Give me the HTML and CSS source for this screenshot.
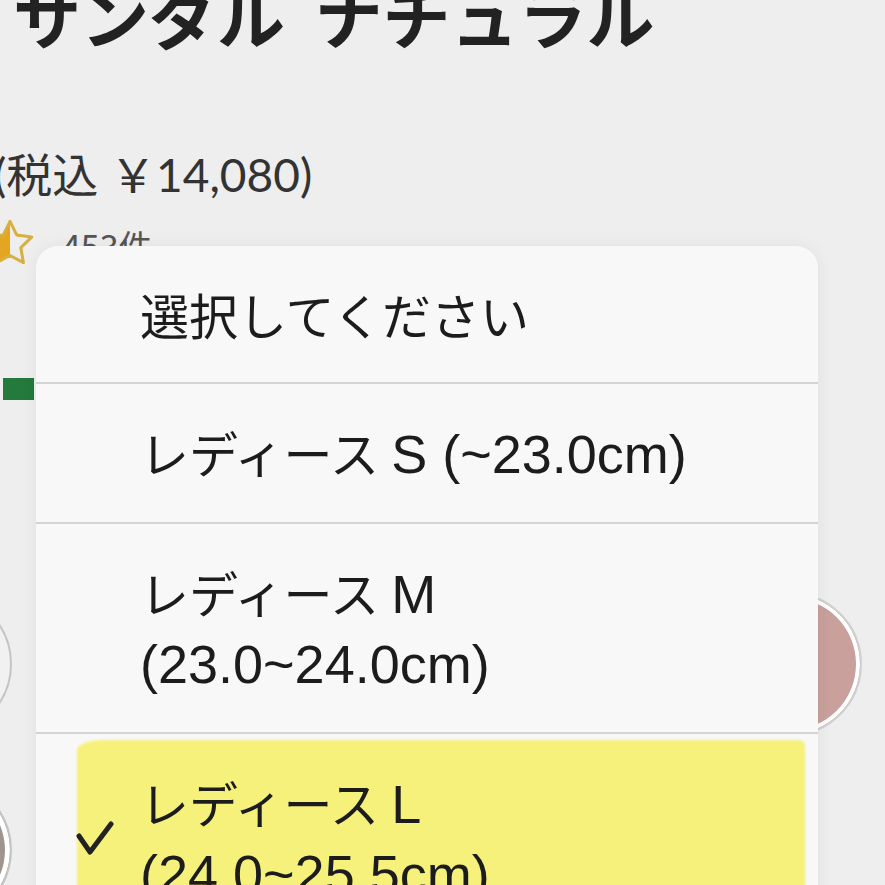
FILE: index.html
```html
<!DOCTYPE html>
<html lang="ja">
<head>
    <meta charset="UTF-8">
    <meta name="viewport" content="width=device-width, initial-scale=1.0">
    <title>サンダル ナチュラル</title>
    <link rel="stylesheet" href="styles.css">
</head>
<body>
    <div class="page">
        <h1 class="title">サンダル ナチュラル</h1>
        <p class="price">(税込 ￥14,080)</p>
        <div class="rating">
            <svg class="star" viewBox="0 0 24 24">
                <defs>
                    <clipPath id="half"><rect x="0" y="0" width="12" height="24"/></clipPath>
                </defs>
                <path d="M12 2l3.09 6.26L22 9.27l-5 4.87 1.18 6.88L12 17.77l-6.18 3.25L7 14.14 2 9.27l6.91-1.01L12 2z" fill="#e4a61e" clip-path="url(#half)"/>
                <path d="M12 2l3.09 6.26L22 9.27l-5 4.87 1.18 6.88L12 17.77l-6.18 3.25L7 14.14 2 9.27l6.91-1.01L12 2z" fill="none" stroke="#d8b040" stroke-width="1.4" stroke-linejoin="round"/>
            </svg>
            <span class="count">453件</span>
        </div>
        <div class="tag"></div>
        <div class="swatches">
            <span class="swatch light"></span>
            <span class="swatch"></span>
            <span class="swatch"></span>
            <span class="swatch"></span>
            <span class="swatch"></span>
            <span class="swatch pink"></span>
            <span class="swatch brown"></span>
        </div>
    </div>

    <!-- サイズ選択メニュー -->
    <div class="menu">
        <div class="option">
            <span></span>
            <span>選択してください</span>
        </div>
        <div class="option">
            <span></span>
            <span>レディース<span class="lat size-code">S (~23.0cm)</span></span>
        </div>
        <div class="option">
            <span></span>
            <span>レディース<span class="lat size-code">M</span><br><span class="lat">(23.0~24.0cm)</span></span>
        </div>
        <div class="option selected">
            <svg class="check" viewBox="0 0 38 36">
                <path d="M3 16 L14 32 L35 4" fill="none" stroke="#222" stroke-width="5" stroke-linecap="round" stroke-linejoin="round"/>
            </svg>
            <span>レディース<span class="lat size-code">L</span><br><span class="lat">(24.0~25.5cm)</span></span>
        </div>
    </div>
</body>
</html>
```

FILE: styles.css
```css
body {
    margin: 0;
    height: 885px;
    overflow: hidden;
    background-color: #eeeeee;
    font-family: "Noto Sans CJK JP", sans-serif;
    color: #1c1c1c;
}
.page {
    position: relative;
}
.title {
    margin: -19px 0 0 13px;
    font-size: 68px;
    line-height: 68px;
    font-weight: 700;
    word-spacing: 14px;
    color: #222;
    white-space: nowrap;
}
.price {
    margin: 98px 0 0 -6px;
    font-family: "Lato", "Noto Sans CJK JP", sans-serif;
    font-size: 46px;
    line-height: 56px;
    color: #333;
}
.rating {
    display: flex;
    align-items: flex-start;
    gap: 26px;
    margin-top: 14px;
}
.star {
    width: 52px;
    height: 52px;
    margin-left: -16px;
}
.count {
    margin-top: 9px;
    font-size: 34px;
    line-height: 40px;
    color: #555;
}
.tag {
    width: 31px;
    height: 22px;
    margin: 109px 0 0 3px;
    background-color: #237a3c;
}
.swatches {
    display: grid;
    grid-template-columns: repeat(6, 144px);
    gap: 42px 26px;
    margin: 192px 0 0 -132px;
}
.swatch {
    width: 144px;
    height: 144px;
    box-sizing: border-box;
    border-radius: 50%;
    border: 2px solid #c4c4c4;
    background-color: #f1f1f1;
}
.swatch.pink {
    background-color: #c9a09b;
    box-shadow: inset 0 0 0 4px #fff;
    border-color: #d0d0d0;
}
.swatch.brown {
    background-color: #9f948e;
    box-shadow: inset 0 0 0 5px #fff;
}

.menu {
    position: absolute;
    left: 36px;
    top: 246px;
    width: 782px;
    background-color: #f8f8f8;
    border-radius: 22px 22px 0 0;
    box-shadow: 0 0 18px rgba(0, 0, 0, 0.06);
    overflow: hidden;
}
.option {
    position: relative;
    display: grid;
    grid-template-columns: 104px 1fr;
    align-items: center;
    padding: 34px 0;
    border-bottom: 2px solid #d3d3d3;
    font-size: 49px;
    line-height: 68px;
    color: #1c1c1c;
    white-space: nowrap;
}
.option > * {
    position: relative;
    z-index: 1;
}
.lat {
    font-family: "Liberation Sans", sans-serif;
    font-size: 54px;
}
.size-code {
    margin-left: 12px;
}
.selected::before {
    content: "";
    position: absolute;
    top: 6px;
    left: 41px;
    right: 13px;
    bottom: -30px;
    background-color: #f5f17a;
    border-radius: 26px 6px 0 0 / 10px 6px 0 0;
    filter: blur(1px);
}
.check {
    width: 38px;
    height: 36px;
    margin-left: 40px;
}
```
